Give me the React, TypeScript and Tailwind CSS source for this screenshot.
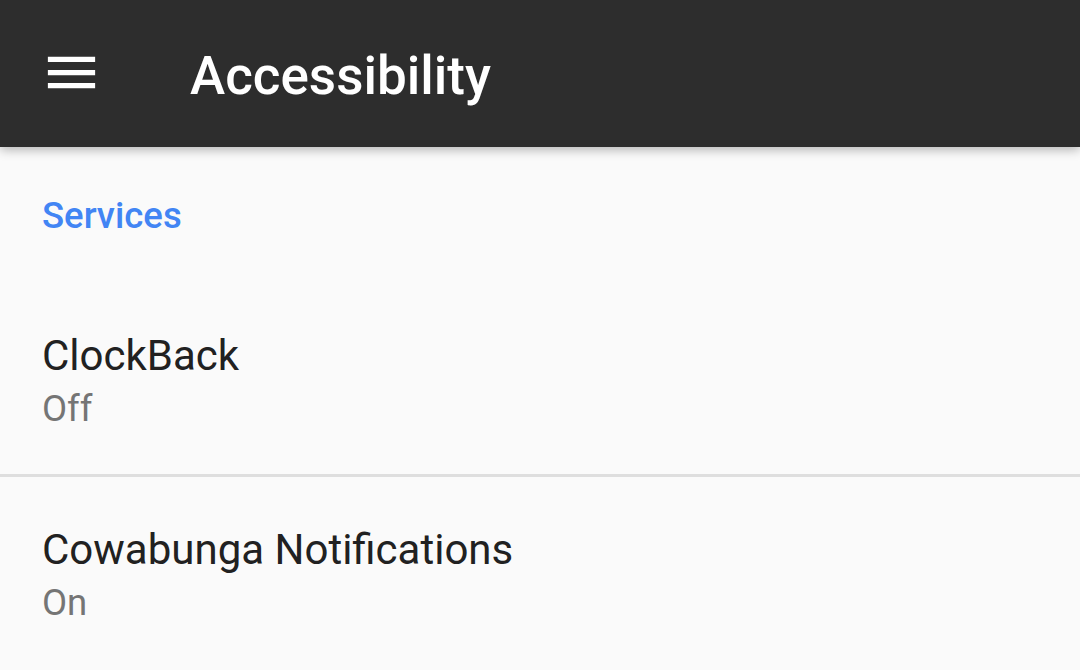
import React from 'react'

const font = { fontFamily: 'Roboto, "Noto Sans", sans-serif' }

interface PrefItem {
  title: string
  summary: string
}

const services: PrefItem[] = [
  { title: 'ClockBack', summary: 'Off' },
  { title: 'Cowabunga Notifications', summary: 'On' },
]

// material "menu" icon
function MenuIcon() {
  return (
    <svg viewBox="0 0 24 24" className="h-[63px] w-[63px] shrink-0" fill="#ffffff">
      <path d="M3 18h18v-2H3v2zm0-5h18v-2H3v2zm0-7v2h18V6H3z" />
    </svg>
  )
}

function Preference({ item }: { item: PrefItem }) {
  return (
    <div className="px-[42px]">
      <div className="text-[42px] leading-[50px] text-[#212121]">{item.title}</div>
      <div className="mt-[6px] text-[36.5px] leading-[44px] text-[#757575]">{item.summary}</div>
    </div>
  )
}

export default function App() {
  return (
    <div className="h-[670px] w-[1080px] overflow-hidden bg-[#fafafa]" style={font}>
      <header className="relative z-10 flex h-[147px] items-start bg-[#2d2d2d] shadow-[0_3px_10px_rgba(0,0,0,0.28)]">
        <div className="ml-[40px] mt-[41px]">
          <MenuIcon />
        </div>
        <h1 className="ml-[87px] mt-[45px] text-[53px] font-medium leading-[62px] text-white">
          Accessibility
        </h1>
      </header>

      <div className="mt-[47px] px-[42px] text-[36.5px] font-medium leading-[44px] text-[#4285f4]">
        Services
      </div>

      <div className="mt-[93px]">
        <Preference item={services[0]} />
      </div>
      <div className="mt-[43px] h-[3px] bg-[#dedede]" />
      <div className="mt-[48px]">
        <Preference item={services[1]} />
      </div>
    </div>
  )
}
